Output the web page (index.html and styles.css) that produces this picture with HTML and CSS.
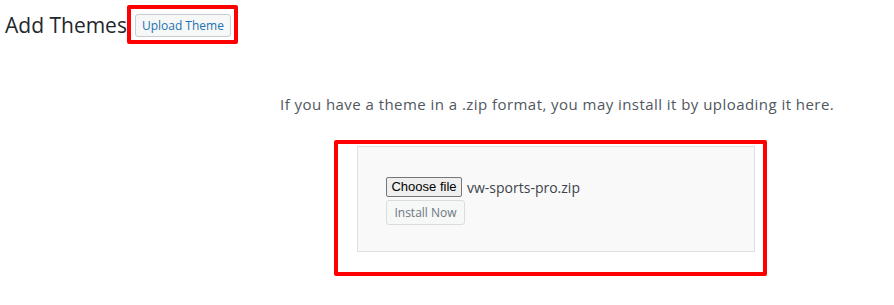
FILE: index.html
```html
<!DOCTYPE html>
<html lang="en">
<head>
  <meta charset="UTF-8">
  <title>Add Themes</title>
  <link rel="stylesheet" href="styles.css">
</head>
<body>
  <!-- Page title -->
  <div class="head">
    <h1>Add Themes</h1>
    <div class="mark mark-small">
      <button class="upload-btn">Upload Theme</button>
    </div>
  </div>

  <!-- Upload form -->
  <div class="upload">
    <p class="help">If you have a theme in a .zip format, you may install it by uploading it here.</p>
    <div class="mark mark-big">
      <form class="upload-form">
        <div class="file-row">
          <span class="choose-btn">Choose file</span>
          <span class="file-name">vw-sports-pro.zip</span>
        </div>
        <button type="button" class="install-btn">Install Now</button>
      </form>
    </div>
  </div>
</body>
</html>
```

FILE: styles.css
```css
* {
  margin: 0;
  padding: 0;
  box-sizing: border-box;
}

body {
  font-family: 'Open Sans', Lato, sans-serif;
  background-color: #fff;
  color: #3c434a;
  width: 894px;
  height: 305px;
}

/* red annotation boxes */
.mark {
  border: 4px solid #ff0000;
  border-radius: 2px;
}

/* Header */
.head {
  display: flex;
  align-items: flex-start;
  padding: 5px 0 0 5px;
}

.head h1 {
  flex: 0 0 120px;
  white-space: nowrap;
  font-size: 21px;
  font-weight: 400;
  line-height: 28px;
  color: #23282d;
  margin-top: 6px;
}

.mark-small {
  width: 111px;
  height: 39px;
  padding: 4px 0 0 4px;
}

.upload-btn {
  width: 96px;
  height: 23px;
  font-family: inherit;
  font-size: 12px;
  color: #2271b1;
  background: #f6f7f7;
  border: 1px solid #c9ccd0;
  border-radius: 3px;
}

/* Upload section */
.upload {
  padding: 50px 0 0 280px;
}

.help {
  font-size: 15px;
  letter-spacing: 0.45px;
  color: #50575e;
  line-height: 20px;
}

.mark-big {
  margin: 26px 0 0 54px;
  width: 433px;
  height: 136px;
  padding: 2px 8px 0 19px;
}

.upload-form {
  height: 106px;
  background: #f9f9f9;
  border: 1px solid #e0e0e0;
  padding: 30px 0 0 28px;
}

.file-row {
  display: flex;
  align-items: center;
  gap: 5px;
}

.choose-btn {
  display: inline-block;
  width: 76px;
  height: 20px;
  line-height: 18px;
  text-align: center;
  font-family: 'Liberation Sans', Arial, sans-serif;
  font-size: 13px;
  color: #000;
  background: #efefef;
  border: 1px solid #767676;
  border-radius: 2px;
}

.file-name {
  font-size: 14px;
  color: #3c434a;
}

.install-btn {
  margin-top: 3px;
  width: 79px;
  height: 25px;
  font-family: inherit;
  font-size: 12px;
  color: #6c7781;
  background: #f6f7f7;
  border: 1px solid #dcdcde;
  border-radius: 3px;
}
```
